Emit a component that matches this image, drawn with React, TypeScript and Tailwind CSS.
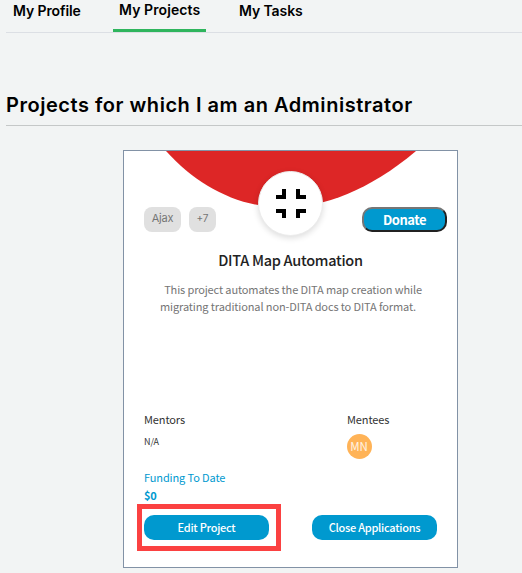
import React from 'react';

const tabFont = "font-['Inter','Open_Sans',sans-serif]";
const bodyFont = "font-['Noto_Sans_CJK_SC','Open_Sans',sans-serif]";

function Tabs() {
  return (
    <nav className="ml-[6px] flex h-[33px] items-start border-b border-[#dcdfe4] text-[14px] font-semibold leading-5 text-black">
      <div className="w-[107px] whitespace-nowrap pl-[7px] pt-px tracking-[-0.1px]">My Profile</div>
      <div className="h-8 w-[93px] whitespace-nowrap border-b-3 border-[#2fb55d] pl-[6px] tracking-[0.1px]">My Projects</div>
      <div className="whitespace-nowrap pl-[33px] pt-px tracking-[-0.1px]">My Tasks</div>
    </nav>
  );
}

function Logo() {
  return (
    <div className="flex size-[65px] items-center justify-center rounded-full border border-[#ececec] bg-white shadow-[0_2px_6px_rgba(0,0,0,0.14)]">
      <svg width="30" height="29" viewBox="0 0 30 29" fill="none" stroke="#000" strokeWidth="4">
        <path d="M8 0V8H0M22 0V8H30M8 29V22H0M22 29V22H30" />
      </svg>
    </div>
  );
}

function ProjectCard() {
  return (
    <article className={`relative ml-[123px] mt-6 flex h-[418px] w-[335px] flex-col border border-[#8292a6] bg-white ${bodyFont}`}>
      <svg className="absolute left-0 top-0" width="333" height="60" viewBox="0 0 333 60">
        <path d="M42 0C102 66 192 84 292 0Z" fill="#dd2626" />
      </svg>
      <div className="absolute left-[134px] top-[20px]"><Logo /></div>
      <div className="flex px-5 pt-14">
        <span className="h-[25px] w-[37px] rounded-[8px] bg-[#e0e0e0] text-center font-['Inter',sans-serif] text-[11px] leading-[23px] tracking-[-0.2px] text-[#757575]">Ajax</span>
        <span className="ml-2 h-[25px] w-[27px] rounded-[8px] bg-[#e0e0e0] text-center font-['Inter',sans-serif] text-[10px] leading-[23px] text-[#757575]">+7</span>
        <button className="-mr-[10px] ml-auto h-[25px] w-[85px] rounded-[10px] border-2 border-t-[#767676] border-r-[#212121] border-b-[#212121] border-l-[#767676] bg-[#0099cf] text-[13px] font-bold leading-[22px] tracking-[-0.5px] text-white">Donate</button>
      </div>
      <h3 className="mt-[17px] text-center text-[14.500px] font-medium leading-[22px] tracking-[-0.28px] text-[#222]">DITA Map Automation</h3>
      <p className="mt-[10px] whitespace-nowrap text-center text-[11px] leading-[17px] tracking-[-0.12px] text-[#757575]">
        <span className="block pl-[5px]">This project automates the DITA map creation while</span>
        <span className="block pr-[5px]">migrating traditional non-DITA docs to DITA format.</span>
      </p>
      <div className="mt-[94px] flex px-5 text-[11px] leading-[20px] tracking-[-0.12px] text-[#333]">
        <div className="w-[203px]">
          <div>Mentors</div>
          <div className="mt-[3px] text-[9px]">N/A</div>
        </div>
        <div>
          <div>Mentees</div>
          <div className="mt-[5px] size-[25px] rounded-full bg-[#ffb357] pr-px text-center text-[11.500px] leading-[25px] text-white/85">MN</div>
        </div>
      </div>
      <div className="mt-[9px] px-5 text-[11px] leading-[18px] tracking-[-0.12px] text-[#0099cf]">
        <div>Funding To Date</div>
        <div className="font-bold">$0</div>
      </div>
      <div className="mt-[11px] flex justify-between px-5 text-[11px] font-medium leading-[23px] tracking-[-0.26px] text-white">
        <button className="h-[25px] w-[125px] rounded-[10px] bg-[#0099cf] pb-px">Edit Project</button>
        <button className="h-[25px] w-[125px] rounded-[10px] bg-[#0099cf] pb-px">Close Applications</button>
      </div>
      <div className="absolute left-[13px] top-[353px] h-[47px] w-[144px] border-5 border-[#fb4141]" />
    </article>
  );
}

export default function App() {
  return (
    <main className={`h-[573px] w-[522px] overflow-hidden bg-[#f2f4f4] ${tabFont}`}>
      <Tabs />
      <h2 className="ml-[6px] mt-[58px] h-[35px] whitespace-nowrap border-b border-[#c5c8c8] text-[20px] font-semibold leading-7 tracking-[0.53px] text-black">Projects for which I am an Administrator</h2>
      <ProjectCard />
    </main>
  );
}
